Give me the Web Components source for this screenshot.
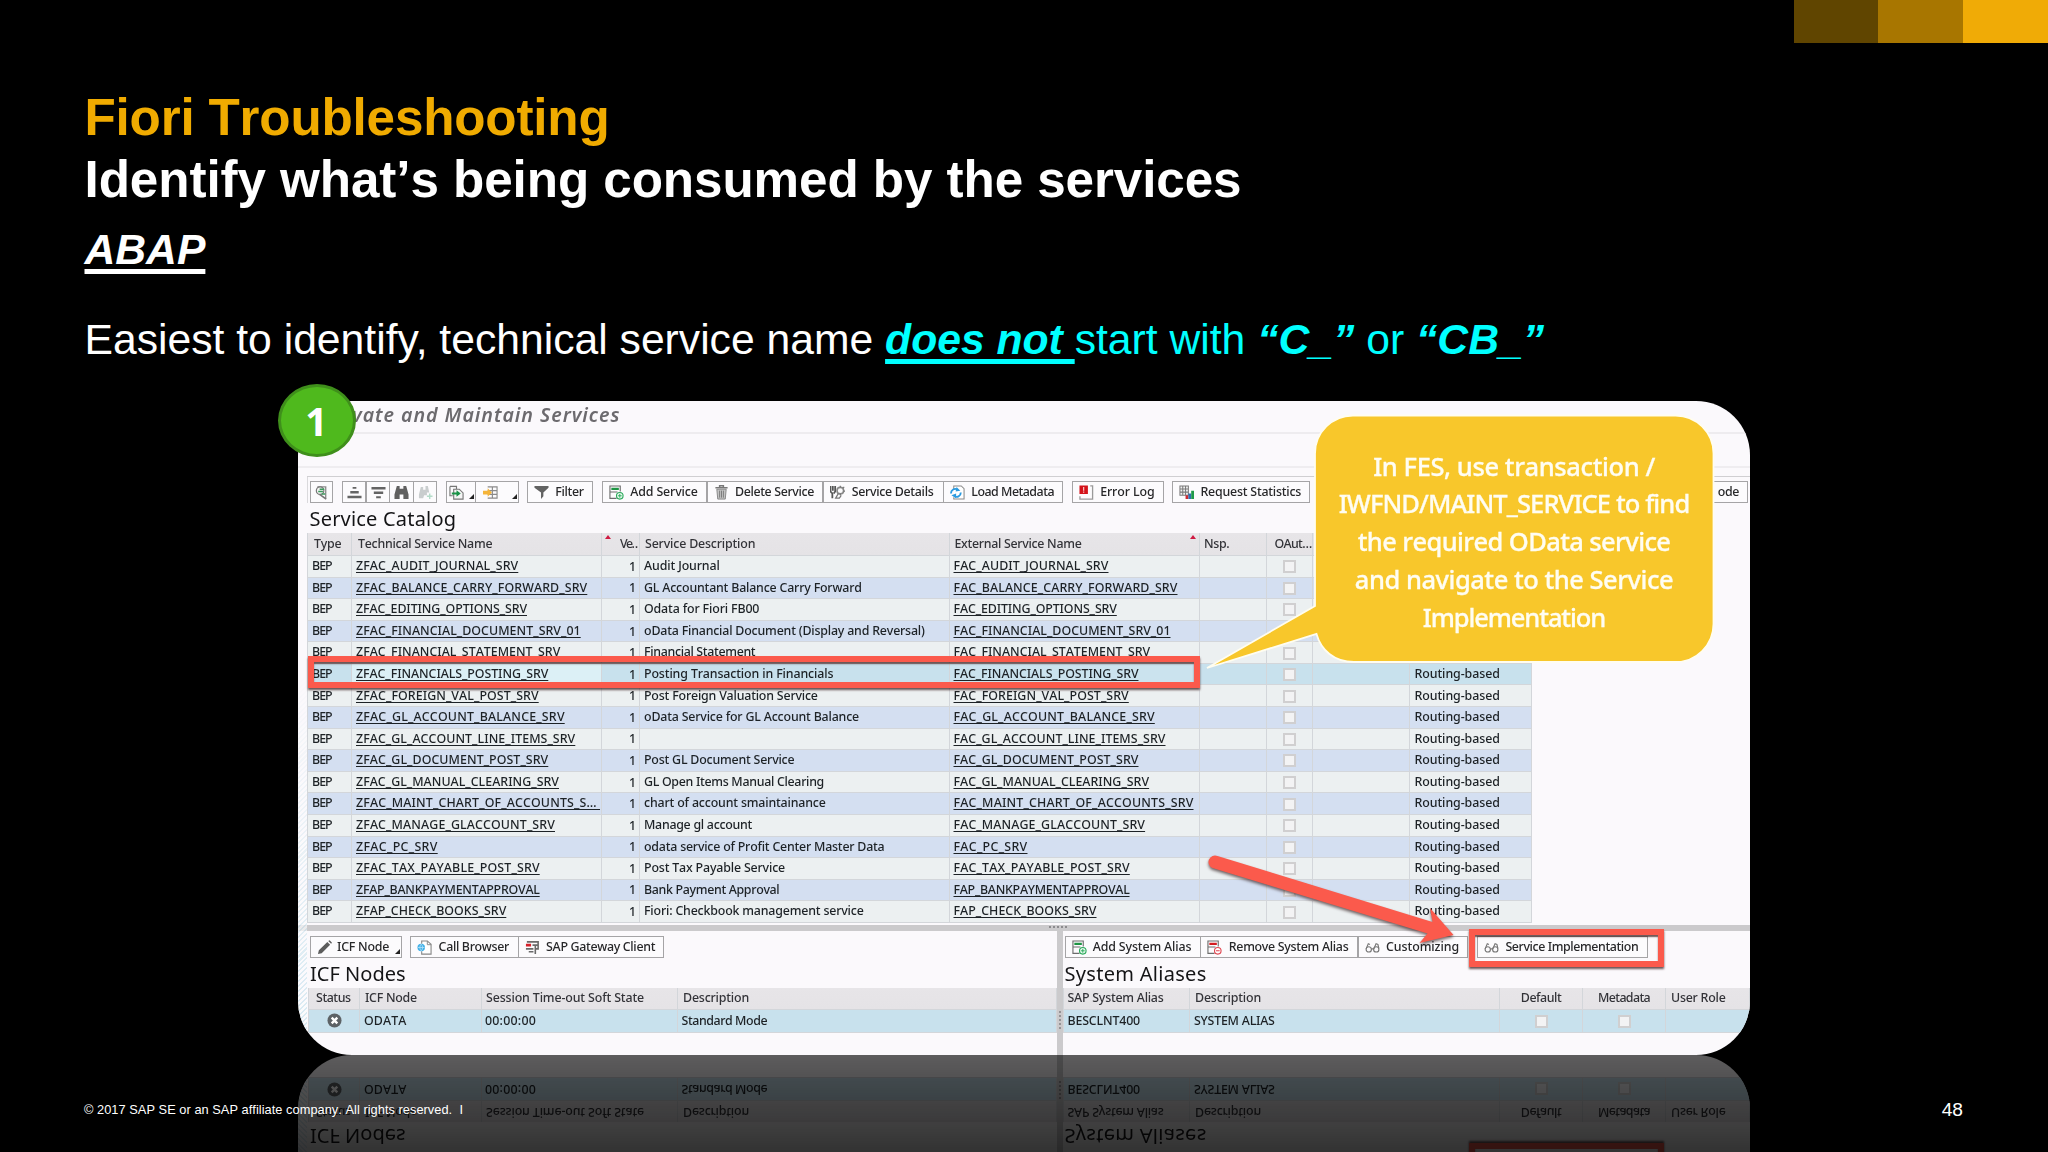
<!DOCTYPE html>
<html lang="en">
<head>
<meta charset="utf-8">
<title>Fiori Troubleshooting</title>
<style>
html,body{margin:0;background:#000;width:2048px;height:1152px;overflow:hidden}
</style>
</head>
<body>
<training-slide></training-slide>
<script>
const ICONS = {
  detail:'<path d="M3.500 2h9v12" fill="none" stroke="#8b8b8b" stroke-width="1.400"/><circle cx="6.500" cy="6" r="4" fill="#f4f4f4" stroke="#777" stroke-width="1.300"/><path d="M4.500 7h5M6 4.500h5M8 9.500h4" stroke="#3b9a5c" stroke-width="1.600"/><path d="M6 10l7 5" stroke="#777" stroke-width="1.800"/>',
  asc:'<path d="M6 2h4v2H6zM3.500 6.500h9V9h-9zM.5 11.500h15V14H.5z" fill="#646464"/>',
  desc:'<path d="M.5 2h15v2.800H.5zM3 7h10v2.500H3zM5.500 12h5v2h-5z" fill="#646464"/>',
  find:'<path d="M3 1h3v3h4V1h3l2.500 9v5H10v-5H6v5H.5v-5z" fill="#606060"/>',
  findnext:'<path d="M3 2h2.500v3H8V1h2.500l1.500 7H9.500v3h-3l-1 3H1v-4z" fill="#c9cdce"/><path d="M12.500 9v6M9.500 12h6" stroke="#b4dcc9" stroke-width="1.500"/>',
  exportf:'<path d="M1 1.500h7v3M1 1.500v10h3M5 4.500h6l4 4V15H5z" fill="#f5f5f5" stroke="#777" stroke-width="1.200"/><path d="M3 8h5V5.500L12.500 9 8 12.500V10H3z" fill="#199347"/>',
  layout:'<path d="M5 2h10v12H5M5 6h10M5 10h10M10 2v12" fill="none" stroke="#8a8a8a" stroke-width="1.200"/><path d="M0 6h5V3.500L9.500 8 5 12.500V10H0z" fill="#f5b53a"/>',
  filter:'<path d="M.5 1h15v2L10 8v4l-2.500 3V8L.5 3z" fill="#626262"/>',
  addrow:'<path d="M8 14.300H1V1h11v6M1 7.500h8" fill="none" stroke="#6d6d6d" stroke-width="1.200"/><path d="M2.500 3h8v2.200h-8z" fill="#1d9443"/><circle cx="11.500" cy="11.500" r="3.500" fill="#eafbf0" stroke="#2ba95b" stroke-width="1.200"/><path d="M9.500 11.500h4M11.500 9.500v4" stroke="#2ba95b"/>',
  delrow:'<path d="M8 14.300H1V1h11v6M1 7.500h8" fill="none" stroke="#6d6d6d" stroke-width="1.200"/><path d="M2.500 3h8v2.200h-8z" fill="#d31b20"/><circle cx="11.500" cy="11.500" r="3.500" fill="#fff" stroke="#e04650" stroke-width="1.200"/><path d="M9.500 11.500h4" stroke="#e04650" stroke-width="1.200"/>',
  trash:'<path d="M6 2V.7h4V2M1.500 3h13" fill="none" stroke="#777" stroke-width="1.600"/><path d="M3 4.500h10l-1 10.500H4z" fill="#c4c4c4" stroke="#858585"/><path d="M6 6v7.500M8 6v7.500M10 6v7.500" stroke="#777"/>',
  gears:'<path d="M.5 1v6l2 2v5M3 1v5M5.500 1v6L4 9" fill="none" stroke="#555" stroke-width="1.900"/><circle cx="11" cy="6" r="3.500" fill="none" stroke="#888" stroke-width="1.700"/><path d="M11 .7v2M11 9v2M13.700 3.300l1.500-1.300M14.500 6.500H16M9 9l-3 5h4l2-3" fill="none" stroke="#777" stroke-width="1.300"/>',
  refresh:'<path d="M4 5V1h8l3 3v11H4v-2" fill="#fff" stroke="#8a8a8a" stroke-width="1.100"/><path d="M1 9c0-4 4-6 7-4" fill="none" stroke="#2a9ae0" stroke-width="2"/><path d="M7 2l4 4-5 1z" fill="#2a9ae0"/><path d="M11.500 8c0 4-4 6-7 3.500" fill="none" stroke="#2a9ae0" stroke-width="2"/><path d="M6.500 14l-5-3 5-2z" fill="#2a9ae0"/>',
  error:'<path d="M12 1h2.500v14H1V12" fill="none" stroke="#9a9a9a" stroke-width="1.400"/><path d="M.5.5h9v9h-9z" fill="#d4131b"/><path d="M5 2v4M5 7v1.200" stroke="#ffd7d7" stroke-width="1.200"/>',
  stats:'<path d="M1 1h9v10H1zM1 4.300h9M1 7.600h9M4 1v10M7 1v10" fill="#f2f2f2" stroke="#7a7a7a" stroke-width="1.100"/><path d="M7 11h3v4H7z" fill="#cf2a30"/><path d="M10 9h3v6h-3z" fill="#2f6fb0"/><path d="M13 6h3v9h-3z" fill="#1f9a4a"/>',
  pencil:'<path d="M1 15l1-4L11 2l3 3-9 9zM12 1l1.500-.8L16 3l-1 1z" fill="#5c5c5c"/>',
  browser:'<path d="M5 4V1h6l4 3.500V15H5v-3" fill="#fff" stroke="#888" stroke-width="1.200"/><path d="M11 1v4h4" fill="none" stroke="#888"/><circle cx="4.500" cy="8" r="4" fill="#3fb0e8"/><path d="M1 8h7M4.500 4.500c-2 2-2 5 0 7M4.500 4.500c2 2 2 5 0 7" stroke="#bfe6fa" fill="none" stroke-width=".8"/>',
  gateway:'<path d="M2 2h12v3.500H8M8 5.500h3V15M14 5v4.500h-3M1 9.500h8M4 12.500h5" fill="none" stroke="#6a6a6a" stroke-width="1.700"/><path d="M1 4h5.500v3H1z" fill="#d6202a"/>',
  glasses:'<g fill="none" stroke="#777" stroke-width="1.200"><circle cx="4" cy="10" r="2.800"/><circle cx="12" cy="10" r="2.800"/><path d="M6.800 9.500h2.400M1.200 9.500L3.500 4l1.800.8M9.300 9.500L11.800 4l2 .8L14.800 9"/></g>'
};
const icon = n => `<svg width="15" height="15" viewBox="0 0 16 16">${ICONS[n]}</svg>`;

/* A run of text tracked so that it fills a given width. */
customElements.define('fit-text', class extends HTMLElement {
  connectedCallback(){
    if (this.shadowRoot) return;
    this.attachShadow({mode:'open'}).innerHTML =
      `<style>:host{display:inline-block;white-space:pre;line-height:1;flex:none}span{display:inline-block;font-kerning:none;text-decoration:inherit}</style><span><slot></slot></span>`;
    const s = this.shadowRoot.querySelector('span');
    const w = +this.getAttribute('w'), n = this.textContent.length;
    if (w) {
      this.style.letterSpacing = ((w - s.getBoundingClientRect().width) / n).toFixed(4) + 'px';
      this.style.width = w + 'px';
    }
  }
});
const fit = (t, w) => `<fit-text w="${w}">${t}</fit-text>`;

customElements.define('tick-box', class extends HTMLElement {
  connectedCallback(){
    this.attachShadow({mode:'open'}).innerHTML =
      `<style>:host{display:block;box-sizing:border-box;width:13px;height:13px;border:2px solid #d0cfd0;background:#f3f3f4;margin-top:1px}</style>`;
  }
});

/* One toolbar button: lead = width of the icon area before the label. */
customElements.define('tool-button', class extends HTMLElement {
  connectedCallback(){
    const g = a => this.getAttribute(a);
    this.attachShadow({mode:'open'}).innerHTML = `<style>
      :host{display:flex;box-sizing:border-box;width:${g('w')}px;height:22px;border:1px solid #a5a4a6;margin-left:${g('gap')||0}px;
        align-items:center;background:#fcfbfd;flex:none;color:#272729;font-size:12.400px}
      .i{width:${(g('lead')||g('w'))-1}px;display:flex;justify-content:center;flex:none}
      .c{margin-left:auto;align-self:flex-end;width:0;height:0;border-left:5px solid transparent;border-bottom:5px solid #222;margin-bottom:3px;margin-right:1px}
      </style>${g('icon')?`<span class="i">${icon(g('icon'))}</span>`:`<span class="i"></span>`}<slot></slot>${this.hasAttribute('caret')?'<i class="c"></i>':''}`;
  }
});
const btn = (w, gap, ic, lead, label, tw, caret) =>
  `<tool-button w="${w}" gap="${gap}" icon="${ic}" lead="${lead||''}" ${caret?'caret':''}>${label?fit(label,tw):''}</tool-button>`;

const gridCss = `
  .r{display:grid;box-sizing:border-box;border-bottom:1px solid #d3d6da;color:#1d2226}
  .r>div{display:flex;align-items:center;box-sizing:border-box;border-right:1px solid #d3d6da;padding-left:4px;overflow:hidden;white-space:nowrap}
  .r>div:first-child{border-left:1px solid #d3d6da}
  .h{background:linear-gradient(#e7e5e8,#e5e3e6);color:#333338}
  .h>div{padding-left:6px}
  .sel{background:#c8e1ed!important}
  .r>.c{justify-content:center;padding:0}
  .u fit-text{text-decoration:underline;text-decoration-thickness:1px;text-underline-offset:2px;text-decoration-skip-ink:none}`;

customElements.define('service-table', class extends HTMLElement {
  connectedCallback(){
    const rows = [
      ['ZFAC_AUDIT_JOURNAL_SRV',162.3,'Audit Journal',75.7,'FAC_AUDIT_JOURNAL_SRV',155],
      ['ZFAC_BALANCE_CARRY_FORWARD_SRV',231.3,'GL Accountant Balance Carry Forward',217.7,'FAC_BALANCE_CARRY_FORWARD_SRV',224],
      ['ZFAC_EDITING_OPTIONS_SRV',171,'Odata for Fiori FB00',115.3,'FAC_EDITING_OPTIONS_SRV',163.3],
      ['ZFAC_FINANCIAL_DOCUMENT_SRV_01',224.7,'oData Financial Document (Display and Reversal)',280.7,'FAC_FINANCIAL_DOCUMENT_SRV_01',217],
      ['ZFAC_FINANCIAL_STATEMENT_SRV',204.3,'Financial Statement',111.3,'FAC_FINANCIAL_STATEMENT_SRV',196.7],
      ['ZFAC_FINANCIALS_POSTING_SRV',192.3,'Posting Transaction in Financials',189.3,'FAC_FINANCIALS_POSTING_SRV',185],
      ['ZFAC_FOREIGN_VAL_POST_SRV',182.7,'Post Foreign Valuation Service',173.8,'FAC_FOREIGN_VAL_POST_SRV',175.3],
      ['ZFAC_GL_ACCOUNT_BALANCE_SRV',208.7,'oData Service for GL Account Balance',215,'FAC_GL_ACCOUNT_BALANCE_SRV',201.3],
      ['ZFAC_GL_ACCOUNT_LINE_ITEMS_SRV',219.3,'',0,'FAC_GL_ACCOUNT_LINE_ITEMS_SRV',212],
      ['ZFAC_GL_DOCUMENT_POST_SRV',192.3,'Post GL Document Service',150.4,'FAC_GL_DOCUMENT_POST_SRV',185],
      ['ZFAC_GL_MANUAL_CLEARING_SRV',203,'GL Open Items Manual Clearing',180,'FAC_GL_MANUAL_CLEARING_SRV',195.6],
      ['ZFAC_MAINT_CHART_OF_ACCOUNTS_S… ',244,'chart of account smaintainance',181.7,'FAC_MAINT_CHART_OF_ACCOUNTS_SRV',240],
      ['ZFAC_MANAGE_GLACCOUNT_SRV',199,'Manage gl account',108,'FAC_MANAGE_GLACCOUNT_SRV',191.6],
      ['ZFAC_PC_SRV',81.7,'odata service of Profit Center Master Data',240.5,'FAC_PC_SRV',74],
      ['ZFAC_TAX_PAYABLE_POST_SRV',183.7,'Post Tax Payable Service',141,'FAC_TAX_PAYABLE_POST_SRV',176.3],
      ['ZFAP_BANKPAYMENTAPPROVAL',183.7,'Bank Payment Approval',135.4,'FAP_BANKPAYMENTAPPROVAL',176],
      ['ZFAP_CHECK_BOOKS_SRV',150.3,'Fiori: Checkbook management service',219.6,'FAP_CHECK_BOOKS_SRV',143]
    ];
    this.attachShadow({mode:'open'}).innerHTML = `<style>:host{display:block;width:1225px;font-size:12.400px}${gridCss}
      .r{grid-template-columns:45px 250px 38px 309.500px 250px 67px 46px 97px 122.500px;height:21.580px;background:#ecf0f1}
      .r.h{height:23.500px;background:linear-gradient(#e7e5e8,#e5e3e6)}
      .r.e{background:#d4dff1}
      .r>.n{justify-content:flex-end;padding-right:3px}
      .s{justify-content:space-between}
      .s:after{content:"";width:0;height:0;border:3px solid transparent;border-top:0;border-bottom:4px solid #cf1a42;align-self:flex-start;margin:2px 3px 0 0}
      .r>.v{justify-content:flex-start;padding-left:3px}
      .v:before{content:"";flex:none;width:0;height:0;border:3px solid transparent;border-top:0;border-bottom:4px solid #cf1a42;align-self:flex-start;margin:2px 9px 0 0}
      .sel .u{background:#dcf0f6}.sel .x{background:#cbe3ee}
      </style>
      <div class="r h"><div>${fit('Type',27.3)}</div><div>${fit('Technical Service Name',134.3)}</div><div class="v">${fit('Ve…',20)}</div><div style="padding-left:5px">${fit('Service Description',110.3)}</div><div class="s" style="padding-left:5px">${fit('External Service Name',127)}</div><div style="padding-left:4.500px">${fit('Nsp.',25.3)}</div><div style="padding-left:8px">${fit('OAut…',37)}</div><div></div><div></div></div>` +
      rows.map((r,i)=>`<div class="r ${i%2?'e':''} ${i==5?'sel':''}"><div>${fit('BEP',19.7)}</div><div class="u">${fit(r[0],r[1])}</div><div class="n">1</div><div>${r[2]?fit(r[2],r[3]):''}</div><div class="u x">${fit(r[4],r[5])}</div><div></div><div class="c"><tick-box></tick-box></div><div></div><div style="padding-left:5px">${i>4?fit('Routing-based',85.3):''}</div></div>`).join('');
  }
});

customElements.define('node-table', class extends HTMLElement {
  connectedCallback(){
    this.attachShadow({mode:'open'}).innerHTML = `<style>:host{display:block;font-size:12.400px}${gridCss}
      .r{grid-template-columns:52px 121.500px 196.500px 1fr;height:22.500px}</style>
      <div class="r h"><div style="padding-left:7px">${fit('Status',34.6)}</div><div style="padding-left:5px">${fit('ICF Node',51.8)}</div><div style="padding-left:4.500px">${fit('Session Time-out Soft State',158)}</div><div style="padding-left:5px">${fit('Description',66)}</div></div>
      <div class="r sel"><div class="c"><svg width="15" height="15" viewBox="0 0 16 16"><circle cx="8" cy="8" r="7.500" fill="#5d6266"/><path d="M5 5l6 6M11 5l-6 6" stroke="#fff" stroke-width="2.600"/></svg></div><div>${fit('ODATA',42.5)}</div><div style="padding-left:3.500px">${fit('00:00:00',51)}</div><div style="padding-left:3.500px">${fit('Standard Mode',85.7)}</div></div>`;
  }
});

customElements.define('alias-table', class extends HTMLElement {
  connectedCallback(){
    this.attachShadow({mode:'open'}).innerHTML = `<style>:host{display:block;font-size:12.400px}${gridCss}
      .r{grid-template-columns:127.500px 310px 83px 83px 1fr;height:22.500px}</style>
      <div class="r h"><div style="padding-left:4px">${fit('SAP System Alias',96)}</div><div style="padding-left:5px">${fit('Description',66)}</div><div class="c">${fit('Default',40.4)}</div><div class="c">${fit('Metadata',52)}</div><div style="padding-left:5px">${fit('User Role',54.6)}</div></div>
      <div class="r sel"><div>${fit('BESCLNT400',72.5)}</div><div>${fit('SYSTEM ALIAS',80.7)}</div><div class="c"><tick-box></tick-box></div><div class="c"><tick-box></tick-box></div><div></div></div>`;
  }
});

customElements.define('call-out', class extends HTMLElement {
  connectedCallback(){
    this.attachShadow({mode:'open'}).innerHTML = `<style>
      :host{position:absolute;left:907px;top:13px;width:512px;height:256px}
      svg{position:absolute;inset:0}
      div{position:relative;margin-left:110px;padding-top:8px;width:398px;height:240px;display:flex;flex-direction:column;align-items:center;justify-content:center;
        color:#fffdf2;font:500 25.500px "Noto Sans","Open Sans",sans-serif;-webkit-text-stroke:.300px #fffdf2}
      fit-text{height:37.800px;line-height:37.800px}</style>
      <svg width="512" height="256"><path d="M149 1.500H470A38 38 0 0 1 508.500 40V210A38 38 0 0 1 470 248H149C129 248 116 236 111.500 220L2 254 110 192V40A38 38 0 0 1 149 1.500Z" fill="#f8c72b" stroke="#fffdf0" stroke-width="1.800"/></svg>
      <div>${fit('In FES, use transaction /',281.7)}${fit('IWFND/MAINT_SERVICE to find',350.7)}${fit('the required OData service',312.7)}${fit('and navigate to the Service',318.3)}${fit('Implementation',182.3)}</div>`;
  }
});

/* The rounded application window, mirrored on the floor below it. */
customElements.define('app-window', class extends HTMLElement {
  connectedCallback(){
    this.attachShadow({mode:'open'}).innerHTML = `<style>
      :host{display:flex;flex-direction:column;position:relative;width:1452px;height:653.500px;border-radius:54px;overflow:hidden;background:#fbf9fc;
        font-family:"Noto Sans","Open Sans",sans-serif;font-weight:500;
        -webkit-box-reflect:below 0 linear-gradient(to bottom,transparent 60%,rgba(0,0,0,.12) 78%,rgba(0,0,0,.370) 100%)}
      .t{height:30.500px;border-bottom:2px solid #eeecef;display:flex;align-items:center;padding-left:54px;font:italic 600 19.600px "Noto Sans","Open Sans",sans-serif;color:#6c6a6e;flex:none}
      .t fit-text{line-height:26px;margin-top:-2px}
      .g{height:32px;border-bottom:2px solid #efedf0;flex:none}
      .m{margin:8px 0 0 9px;height:449px;border-top:1px solid #d0cfd2;flex:none;box-sizing:border-box}
      .b{display:flex;padding:4.500px 0 0 2px}
      .m .b{border-left:1px solid #dad9dc;padding-left:1.500px}
      .n{color:#141416;font-weight:400;font-size:20px;display:flex;align-items:center;padding-left:2.500px;height:29.500px}
      .n fit-text{line-height:28px;margin-top:3px}
      .split{height:6px;background:#cbcacc;flex:none;display:flex;justify-content:center}
      .dots{width:20px;height:2px;margin:1px 0 0 70px;background:repeating-linear-gradient(90deg,#8c8b8e 0 2px,transparent 2px 4px)}
      .l{flex:1;display:flex}
      .p{box-sizing:border-box;padding-left:10px;width:758.500px}
      .q{width:687.500px;box-sizing:border-box}
      .l .b{padding-top:5.500px}
      .v{width:6px;background:#cbcacc;display:flex;align-items:flex-end}
      .v i{width:2px;height:20px;margin:0 0 24px 2px;background:repeating-linear-gradient(#949396 0 2px,transparent 2px 4px)}
      .l .n{height:29.500px;padding-left:2px}
      .hatch{position:absolute;left:0;top:270px;width:9px;bottom:0;background:repeating-linear-gradient(135deg,#fbfafc 0 2px,#d5e8f1 2px 3.500px);-webkit-mask:linear-gradient(transparent,#000);mask:linear-gradient(transparent,#000)}
      .box{position:absolute;box-sizing:border-box;border:6px solid #fb5a4c;box-shadow:0 2px 2px rgba(60,30,30,.75),inset 0 2px 1.500px rgba(60,30,30,.75)}
      .arrow{position:absolute;left:899px;top:440px;filter:drop-shadow(0 2px 1.500px rgba(60,40,40,.7))}
    </style>
    <div class="hatch"></div>
    <div class="t">${fit('vate and Maintain Services',268.5)}</div>
    <div class="g"></div>
    <div class="m">
      <div class="b">
        ${btn(23.5,0,'detail')}${btn(24.2,9,'asc')}${btn(24.2,-.5,'desc')}${btn(24.2,-.5,'find')}${btn(24,-.5,'findnext')}
        ${btn(30,8.7,'exportf',20,'',0,1)}${btn(43.5,-.5,'layout',29,'',0,1)}
        ${btn(65.7,8.6,'filter',28,'Filter',28.3)}${btn(105.2,9,'addrow',28.3,'Add Service',67.3)}${btn(116.5,-.5,'trash',28.3,'Delete Service',79)}${btn(120.8,-.5,'gears',29,'Service Details',81.7)}${btn(120.2,-.5,'refresh',28.3,'Load Metadata',82.7)}
        ${btn(92,8.6,'error',28.4,'Error Log',54.3)}${btn(138,8.7,'stats',28,'Request Statistics',100.7)}
        <tool-button w="60" gap="377.700" lead="29.600">${fit('ode',21.3)}</tool-button>
      </div>
      <div class="n">${fit('Service Catalog',146.7)}</div>
      <service-table></service-table>
    </div>
    <div class="split"><i class="dots"></i></div>
    <div class="l">
      <div class="p">
        <div class="b">${btn(91.6,0,'pencil',27,'ICF Node',52,1)}${btn(108.5,8.7,'browser',28.300,'Call Browser',70.4)}${btn(146,-.5,'gateway',27.8,'SAP Gateway Client',109)}</div>
        <div class="n">${fit('ICF Nodes',95.7)}</div>
        <node-table></node-table>
      </div>
      <div class="v"><i></i></div>
      <div class="q">
        <div class="b">${btn(136,0,'addrow',28.2,'Add System Alias',98.6)}${btn(158,-.5,'delrow',28.8,'Remove System Alias',119.6)}${btn(110,-.5,'glasses',28.5,'Customizing',73)}${btn(170.5,9.5,'glasses',28.4,'Service Implementation',133)}</div>
        <div class="n">${fit('System Aliases',142)}</div>
        <alias-table></alias-table>
      </div>
    </div>
    <div class="box" style="left:9.500px;top:255px;width:892.500px;height:32px"></div>
    <call-out></call-out>
    <div class="box" style="left:1171px;top:528px;width:194.500px;height:37.500px"></div>
    <svg class="arrow" width="270" height="120" viewBox="1198 841 270 120"><path d="M1218.500 856L1433.500 922 1431 908 1454.500 935 1420.500 943 1428.500 933.500 1213.500 868A6.300 6.300 0 0 1 1218.500 856Z" fill="#fb5a4c"/></svg>`;
  }
});

customElements.define('step-badge', class extends HTMLElement {
  connectedCallback(){
    this.attachShadow({mode:'open'}).innerHTML = `<style>:host{position:absolute;left:277.500px;top:383.500px;width:78.700px;height:73.500px;box-sizing:border-box;border:3px solid #3f8f1b;border-radius:50%;
      background:#4fb91d;color:#fff;display:flex;align-items:center;justify-content:center;font:bold 39px/1 "Noto Sans",sans-serif;padding-right:1px}</style><slot></slot>`;
  }
});

customElements.define('training-slide', class extends HTMLElement {
  connectedCallback(){
    this.attachShadow({mode:'open'}).innerHTML = `<style>
      :host{display:flex;flex-direction:column;position:relative;width:2048px;height:1152px;background:#000;overflow:hidden;color:#fff;font-family:"Liberation Sans",Arial,sans-serif}
      .bars{display:flex;justify-content:flex-end;height:42.500px;flex:none}
      .bars i{width:84.800px}
      header{padding:44.500px 0 0 84.500px;font-weight:bold;font-size:51.200px;height:271.500px;flex:none}
      header>div{height:61px;line-height:61px;white-space:nowrap}
      header fit-text{line-height:61px}
      .o{color:#f0ab00}
      header .s{padding-top:1px}
      header .a{font-size:42.670px;font-style:italic;text-decoration:underline;text-decoration-thickness:5px;text-underline-offset:4.500px;height:79px;line-height:78px;text-decoration-skip-ink:none}
      header .e{font-size:42.670px;font-weight:normal;height:70px;line-height:70px;margin-top:15px;white-space:pre;text-decoration-skip-ink:none}
      .e span{color:#0ff}.e em{font-weight:bold}
      u{text-decoration-thickness:4.500px;text-underline-offset:4.500px}
      app-window{margin:42.500px 0 0 298px;flex:none}
      footer{position:absolute;left:84px;right:85px;top:1098px;display:flex;justify-content:space-between;align-items:center;height:24px;font-size:12.800px}
      footer b{font-weight:normal;font-size:19.200px}
    </style>
    <div class="bars"><i style="background:#604500"></i><i style="background:#a87600"></i><i style="background:#f0ab06"></i></div>
    <header>
      <div class="o">${fit('Fiori Troubleshooting',525)}</div>
      <div class="s">${fit('Identify what’s being consumed by the services',1157)}</div>
      <div class="a">ABAP</div>
      <div class="e">Easiest to identify, technical service name <span><em><u>does not </u></em>start with <em>“C_”</em> or <em>“CB_”</em></span></div>
    </header>
    <app-window></app-window>
    <step-badge>1</step-badge>
    <footer>${fit('© 2017 SAP SE or an SAP affiliate company. All rights reserved.  I',379)}<b>48</b></footer>`;
  }
});
</script>
</body>
</html>
